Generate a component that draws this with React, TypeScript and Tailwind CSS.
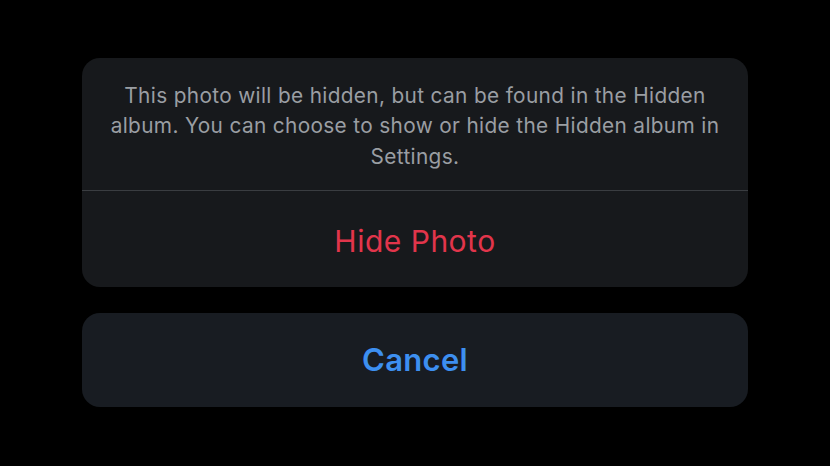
export default function App() {
  return (
    <div
      className="w-[830px] h-[466px] bg-black flex flex-col items-center pt-[58px] gap-[26px]"
      style={{ fontFamily: 'Inter, "Noto Sans", sans-serif' }}
    >
      <div className="w-[666px] h-[229px] rounded-[18px] bg-[#17191c] flex flex-col overflow-hidden">
        <div className="h-[133px] flex items-center justify-center pt-[5px] px-[18px] border-b border-[#3a3d41]">
          <p className="w-[630px] text-center text-[20.8px] leading-[30.5px] tracking-[0.35px] text-[#9a9ea3]">
            This photo will be hidden, but can be found in the Hidden album. You can choose to show or hide the Hidden album in Settings.
          </p>
        </div>
        <div className="flex-1 flex items-center justify-center pt-[4px]">
          <span className="text-[30px] tracking-[0.5px] text-[#e2354b]">Hide Photo</span>
        </div>
      </div>
      <div className="w-[666px] h-[94px] rounded-[18px] bg-[#181c22] flex items-center justify-center">
        <span className="text-[31px] font-semibold tracking-[0.3px] text-[#3d8ff0]">Cancel</span>
      </div>
    </div>
  );
}
